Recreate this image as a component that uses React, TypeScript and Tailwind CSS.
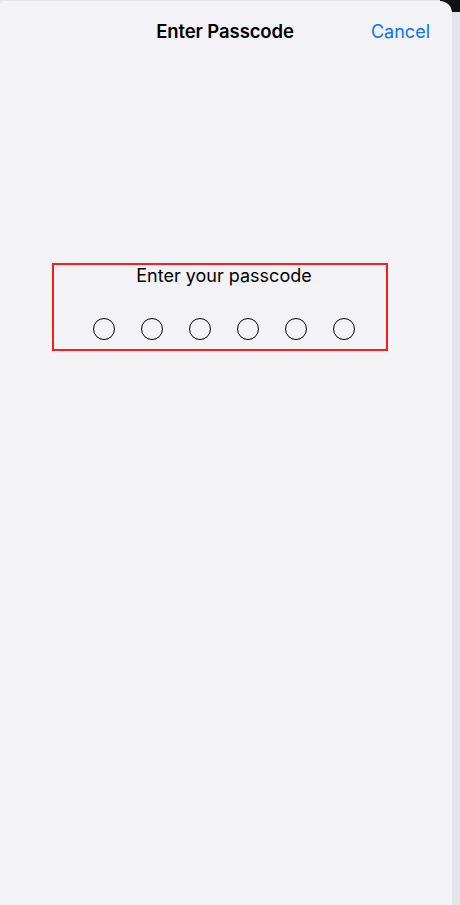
import React from "react";

const DIGITS = 6;

export default function App() {
  return (
    <div
      className="relative w-[460px] h-[905px] bg-[#e3e5ea] overflow-hidden"
      style={{ fontFamily: "Inter, 'Noto Sans', 'Liberation Sans', sans-serif" }}
    >
      {/* dark corner behind the sheet's rounded top-right */}
      <div className="absolute top-0 right-0 w-[20px] h-[12px] bg-[#111]" />

      <div className="relative mt-[1px] w-[452px] h-[904px] bg-[#f2f2f7] rounded-tr-[12px] rounded-tl-[4px]">
        {/* Nav bar */}
        <header className="relative h-[59px] flex items-center justify-center pt-[2px]">
          <h1 className="text-[18.5px] font-semibold text-black tracking-[-0.1px] -ml-[2px]">Enter Passcode</h1>
          <button className="absolute right-[22px] top-1/2 -translate-y-1/2 text-[18px] text-[#0a72f0]">
            Cancel
          </button>
        </header>

        {/* Passcode prompt */}
        <div className="pt-[203px] pl-[52px]">
          <div className="w-[336px] h-[88px] border-2 border-[#ff1a1a] flex flex-col items-center">
            <p className="-mt-[1px] text-[18px] leading-[24px] text-black pl-[8px]">Enter your passcode</p>
            <div className="mt-[30px] flex gap-[26px] pl-[7px]">
              {Array.from({ length: DIGITS }).map((_, i) => (
                <span
                  key={i}
                  className="block w-[22px] h-[22px] rounded-full border border-black"
                />
              ))}
            </div>
          </div>
        </div>
      </div>
    </div>
  );
}
